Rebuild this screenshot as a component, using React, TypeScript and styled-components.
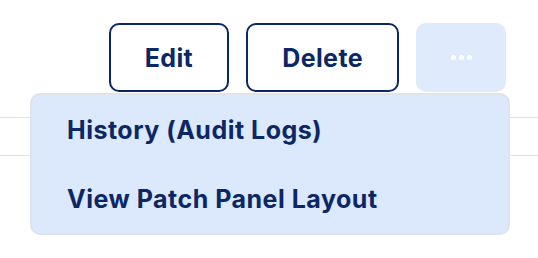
import * as React from "react";
import styled, { createGlobalStyle } from "styled-components";

const GlobalStyle = createGlobalStyle`
  body {
    margin: 0;
    background: #ffffff;
    font-family: Inter, "Liberation Sans", sans-serif;
  }
`;

const navy = "#0b2766";

export default function App() {
  const [open] = React.useState(true);
  const rows = ["", ""];

  return (
    <Page>
      <GlobalStyle />
      <Toolbar>
        <OutlineButton>Edit</OutlineButton>
        <OutlineButton>Delete</OutlineButton>
        <MoreWrap>
          <MoreButton aria-label="More actions">
            <Dot />
            <Dot />
            <Dot />
          </MoreButton>
          {open && (
            <Menu>
              <MenuItem>History (Audit Logs)</MenuItem>
              <MenuItem>View Patch Panel Layout</MenuItem>
            </Menu>
          )}
        </MoreWrap>
      </Toolbar>
      <Table>
        {rows.map((r, i) => (
          <Row key={i} first={i === 0}>
            {r}
          </Row>
        ))}
      </Table>
    </Page>
  );
}

const Page = styled.div`
  width: 538px;
  height: 258px;
  overflow: hidden;
`;

const Toolbar = styled.div`
  display: flex;
  justify-content: flex-end;
  align-items: stretch;
  gap: 17px;
  padding: 23px 32px 0 0;
`;

const OutlineButton = styled.button`
  height: 69px;
  padding: 0 34px;
  border: 2px solid ${navy};
  border-radius: 10px;
  background: #ffffff;
  color: ${navy};
  font-family: inherit;
  font-size: 25px;
  font-weight: 700;
  letter-spacing: 0.4px;
  cursor: pointer;
`;

const MoreWrap = styled.div`
  position: relative;
`;

const MoreButton = styled.button`
  width: 90px;
  height: 69px;
  border: none;
  border-radius: 10px;
  background: #dfeafc;
  display: flex;
  align-items: center;
  justify-content: center;
  gap: 3px;
  cursor: pointer;
`;

const Dot = styled.span`
  width: 5px;
  height: 5px;
  border-radius: 50%;
  background: #ffffff;
`;

const Menu = styled.div`
  position: absolute;
  top: calc(100% + 1px);
  right: -4px;
  width: 476px;
  background: #dce8fb;
  border: 2px solid #dfe3ea;
  border-radius: 10px;
  z-index: 10;
`;

const MenuItem = styled.div`
  height: 69px;
  display: flex;
  align-items: center;
  padding-left: 35px;
  color: ${navy};
  font-size: 25px;
  font-weight: 700;
  letter-spacing: 0.5px;
  white-space: nowrap;
`;

const Table = styled.div`
  display: flex;
  flex-direction: column;
`;

const Row = styled.div<{ first?: boolean }>`
  height: ${(p) => (p.first ? "25px" : "37px")};
  border-bottom: 1px solid #dfe3ea;
`;
